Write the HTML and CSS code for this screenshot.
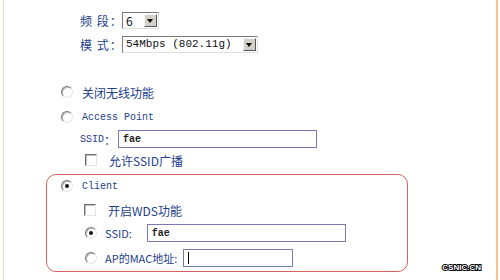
FILE: index.html
```html
<!DOCTYPE html>
<html lang="zh-CN">
<head>
    <meta charset="UTF-8">
    <title>无线设置</title>
    <link rel="stylesheet" href="styles.css">
</head>
<body>
    <div class="frame">
        <div class="field-row">
            <label class="field-label">频 段：</label>
            <div class="select small-select"><span class="select-value">6</span><span class="select-btn"></span></div>
        </div>
        <div class="field-row">
            <label class="field-label">模 式：</label>
            <div class="select mode-select"><span class="select-value lat">54Mbps (802.11g)</span><span class="select-btn"></span></div>
        </div>

        <div class="option off-option">
            <span class="radio"></span>
            <span>关闭无线功能</span>
        </div>
        <div class="option">
            <span class="radio"></span>
            <span class="lat">Access Point</span>
        </div>
        <div class="ssid-row">
            <span class="lat">SSID</span><span>：</span>
            <div class="text-input ap-ssid"><span class="lat bold">fae</span></div>
        </div>
        <div class="check-row">
            <span class="checkbox"></span>
            <span>允许SSID广播</span>
        </div>

        <div class="client-box">
            <div class="option client-option">
                <span class="radio checked"></span>
                <span class="lat">Client</span>
            </div>
            <div class="check-row inner">
                <span class="checkbox"></span>
                <span>开启WDS功能</span>
            </div>
            <div class="sub-option">
                <span class="radio checked"></span>
                <span class="sub-label">SSID:</span>
                <div class="text-input client-ssid"><span class="lat bold">fae</span></div>
            </div>
            <div class="sub-option">
                <span class="radio"></span>
                <span class="sub-label">AP的MAC地址:</span>
                <div class="text-input mac-input"><span class="caret"></span></div>
            </div>
        </div>

        <div class="watermark">CSNIC.CN</div>
    </div>
</body>
</html>
```

FILE: styles.css
```css
body {
    margin: 0;
    padding: 0;
    background-color: #fff;
    font-family: "Noto Sans CJK SC", "DejaVu Sans", sans-serif;
    font-size: 12px;
    color: #24408c;
}
.frame {
    position: relative;
    height: 280px;
    margin: 0 2px 0 3px;
    padding-top: 12px;
    box-sizing: border-box;
    border-left: 1px solid #efdab6;
    border-right: 2px solid #f5c68c;
}
.lat {
    font-family: "Liberation Mono", monospace;
    font-size: 10px;
}
.bold {
    font-weight: bold;
    color: #222;
}
.field-row {
    display: flex;
    align-items: center;
    height: 17px;
    padding-left: 76px;
    margin-bottom: 7px;
}
.field-label {
    width: 42px;
    white-space: nowrap;
    letter-spacing: 1px;
}
.select {
    display: flex;
    align-items: center;
    height: 17px;
    box-sizing: border-box;
    border: 1px solid;
    border-color: #7a7a7a #e0e0e0 #e0e0e0 #7a7a7a;
    background-color: #fff;
    color: #111;
}
.small-select {
    width: 37px;
}
.mode-select {
    width: 136px;
}
.mode-select .lat {
    font-size: 11px;
}
.select-value {
    flex: 1;
    padding-left: 3px;
    line-height: 15px;
}
.select-btn {
    position: relative;
    width: 13px;
    height: 13px;
    margin-right: 1px;
    background-color: #d4d0c8;
    border: 1px solid;
    border-color: #f4f4f4 #555 #555 #f4f4f4;
    box-sizing: border-box;
}
.select-btn::after {
    content: "";
    position: absolute;
    left: 2px;
    top: 4px;
    border-left: 3.5px solid transparent;
    border-right: 3.5px solid transparent;
    border-top: 4px solid #000;
}
.option {
    display: flex;
    align-items: center;
    gap: 9px;
    height: 16px;
    padding-left: 57px;
}
.off-option {
    margin-top: 31px;
    margin-bottom: 9px;
}
.radio {
    display: inline-block;
    width: 10px;
    height: 10px;
    border-radius: 50%;
    border: 1px solid;
    border-color: #777 #e6e6e6 #e6e6e6 #777;
    background-color: #fff;
    box-shadow: inset 1px 1px 0 #bbb;
    position: relative;
}
.radio.checked::after {
    content: "";
    position: absolute;
    left: 3px;
    top: 3px;
    width: 4px;
    height: 4px;
    border-radius: 50%;
    background-color: #111;
}
.ssid-row {
    display: flex;
    align-items: center;
    height: 18px;
    padding-left: 76px;
    margin-top: 5px;
}
.text-input {
    display: flex;
    align-items: center;
    height: 18px;
    box-sizing: border-box;
    border: 1px solid #7878b4;
    background-color: #fff;
    padding-left: 4px;
}
.ap-ssid {
    width: 199px;
    margin-left: 2px;
}
.check-row {
    display: flex;
    align-items: center;
    gap: 12px;
    height: 14px;
    padding-left: 81px;
    margin-top: 5px;
}
.checkbox {
    display: inline-block;
    width: 10px;
    height: 10px;
    border: 1px solid;
    border-color: #6f6f6f #e4e4e4 #e4e4e4 #6f6f6f;
    box-shadow: inset 1px 1px 0 #c0c0c0;
    background-color: #fff;
}
.client-box {
    width: 362px;
    height: 98px;
    margin: 7px 0 0 42px;
    box-sizing: border-box;
    border: 1.5px solid #d65f62;
    border-radius: 10px;
    padding-top: 3px;
}
.client-option {
    padding-left: 14px;
}
.check-row.inner {
    padding-left: 37px;
    margin-top: 9px;
}
.sub-option {
    display: flex;
    align-items: center;
    height: 18px;
    padding-left: 38px;
    margin-top: 7px;
}
.sub-option .radio {
    margin-right: 8px;
}
.sub-label {
    font-size: 11px;
}
.client-ssid {
    width: 199px;
    margin-left: 15px;
}
.mac-input {
    width: 110px;
    margin-left: 6px;
}
.caret {
    display: inline-block;
    width: 1px;
    height: 12px;
    background-color: #000;
}
.watermark {
    position: absolute;
    right: 15px;
    bottom: 8px;
    font-family: "Liberation Sans Narrow", "Liberation Sans", sans-serif;
    font-size: 8px;
    font-weight: bold;
    color: #fff;
    -webkit-text-stroke: 2px #000;
    paint-order: stroke fill;
}
```
